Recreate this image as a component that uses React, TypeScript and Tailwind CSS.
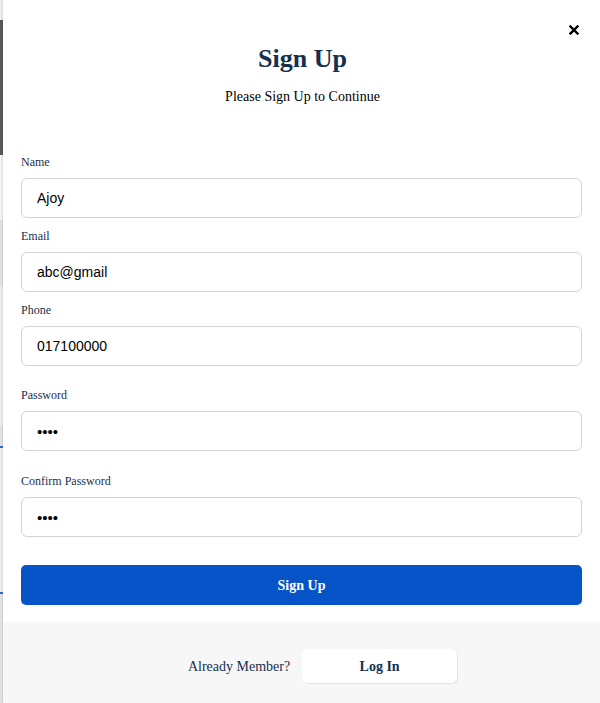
import React from "react";

const serif = { fontFamily: '"Liberation Serif", "Times New Roman", serif' };
const sans = { fontFamily: '"Liberation Sans", Arial, sans-serif' };

type Field = { label: string; value: string; type?: string; gap: string };

const fields: Field[] = [
  { label: "Name", value: "Ajoy", gap: "mt-0" },
  { label: "Email", value: "abc@gmail", gap: "mt-[10px]" },
  { label: "Phone", value: "017100000", gap: "mt-[10px]" },
  { label: "Password", value: "abcd", type: "password", gap: "mt-[21px]" },
  { label: "Confirm Password", value: "abcd", type: "password", gap: "mt-[22px]" },
];

function CloseIcon() {
  return (
    <svg width="10" height="10" viewBox="0 0 10 10" aria-hidden="true">
      <path d="M1.5 1.5 L8.5 8.5 M8.5 1.5 L1.5 8.5" stroke="#000" strokeWidth="2.4" strokeLinecap="square" />
    </svg>
  );
}

export default function App() {
  return (
    <div className="flex h-[703px] w-[600px] overflow-hidden bg-white">
      {/* page behind the dialog, peeking out on the left */}
      <div className="flex w-[3px] shrink-0 flex-col">
        <div className="h-[20px] bg-[#f1f1f4]" />
        <div className="h-[135px] bg-[#5a5a5f]" />
        <div className="h-[65px] bg-[#f7f7f9]" />
        <div className="h-[67px] bg-[#e4e5e9]" />
        <div className="h-[138px] bg-[#f2f2f6]" />
        <div className="h-[21px] bg-[#e4e5e9]" />
        <div className="h-[2px] bg-[#2b6fd6]" />
        <div className="h-[144px] bg-[#f2f2f6]" />
        <div className="h-[2px] bg-[#2b6fd6]" />
        <div className="flex-1 bg-[#e4e5e9]" />
      </div>

      <div className="relative flex flex-1 flex-col bg-white shadow-[-1px_0_2px_rgba(0,0,0,0.12)]" style={serif}>
        <button className="absolute right-[21px] top-[25px] flex h-[10px] w-[10px] items-center justify-center">
          <CloseIcon />
        </button>

        <div className="pt-[44px] text-center">
          <h2 className="pl-[2px] text-[26px] font-bold leading-[30px] text-[#14304f]">Sign Up</h2>
          <p className="mt-[13px] pl-[2px] text-[14px] leading-[20px] text-black">Please Sign Up to Continue</p>
        </div>

        <form className="mt-[47px] flex flex-col px-[18px]" onSubmit={(e) => e.preventDefault()}>
          {fields.map((f) => (
            <div key={f.label} className={f.gap}>
              <label className="mb-[8px] block text-[12px] leading-[16px] text-[#17304d]">{f.label}</label>
              <input
                type={f.type ?? "text"}
                defaultValue={f.value}
                className={
                  f.type === "password"
                    ? "block h-[40px] w-full rounded-[6px] border border-[#cfd4da] bg-white px-[15px] text-[15px] text-black outline-none"
                    : "block h-[40px] w-full rounded-[6px] border border-[#cfd4da] bg-white px-[15px] text-[14px] text-black outline-none"
                }
                style={sans}
              />
            </div>
          ))}

          <button
            type="submit"
            className="mt-[28px] h-[40px] w-full rounded-[5px] bg-[#0754c8] text-[14px] font-bold text-white"
            style={serif}
          >
            Sign Up
          </button>
        </form>

        <div className="mt-[17px] flex flex-1 items-start justify-center bg-[#f7f7f7] pl-[42px] pt-[27px]">
          <div className="flex items-center gap-[12px]">
            <span className="text-[14px] text-[#17304d]">Already Member?</span>
            <button
              className="h-[34px] w-[155px] rounded-[6px] bg-white text-[14px] font-bold text-[#14304f] shadow-[1px_1px_1px_rgba(0,0,0,0.08)]"
              style={serif}
            >
              Log In
            </button>
          </div>
        </div>
      </div>
    </div>
  );
}
